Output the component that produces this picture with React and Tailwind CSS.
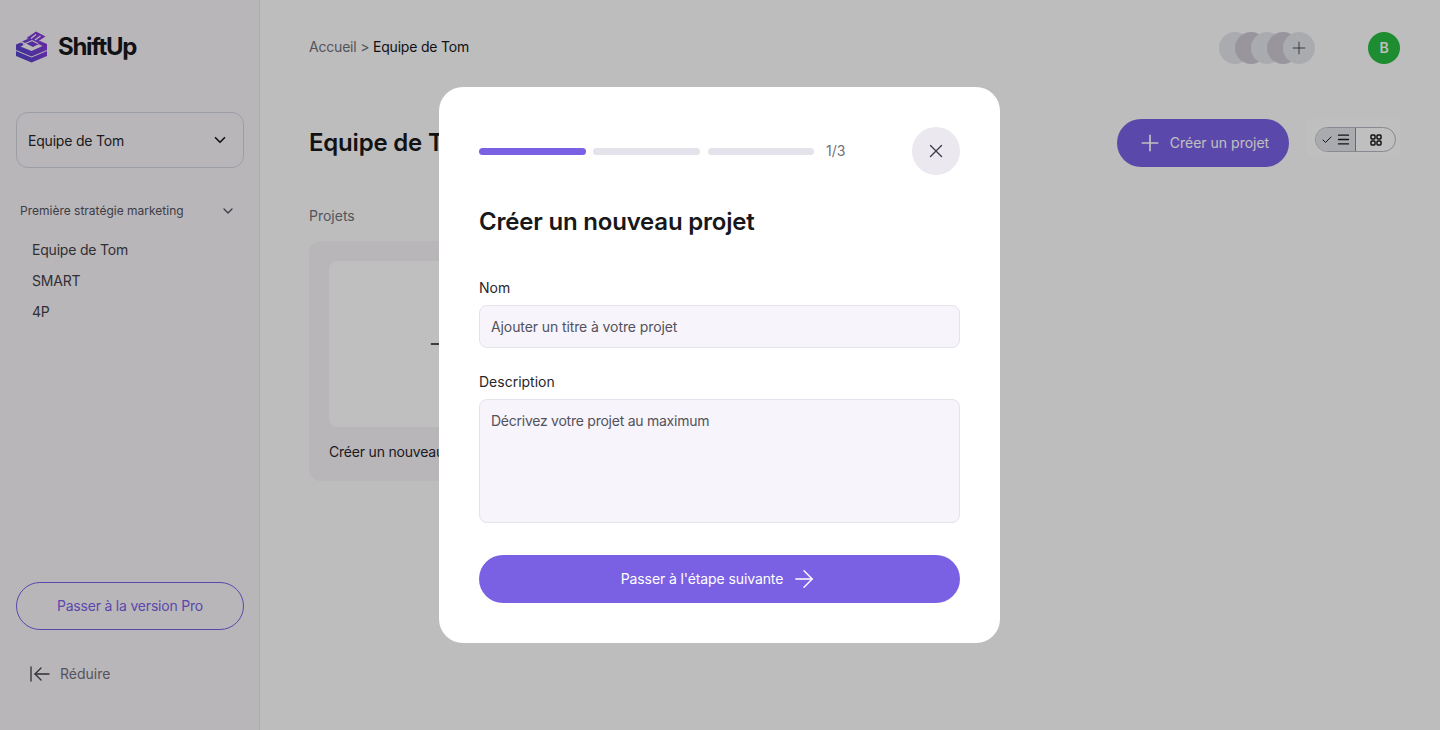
import React from "react";
import { ArrowLeftToLine, ArrowRight, Check, ChevronDown, Menu, Plus, X } from "lucide-react";

const Logo = () => (
  <svg width="32" height="32" viewBox="0 0 32 32" fill="none" className="shrink-0">
    <defs>
      <linearGradient id="stack" x1="0" y1="28" x2="32" y2="6" gradientUnits="userSpaceOnUse">
        <stop offset="0" stopColor="#4f46c8" />
        <stop offset="1" stopColor="#8f38dc" />
      </linearGradient>
    </defs>
    {/* bottom layer */}
    <path d="M0 20L15.5 26.5L31 20V25L15.5 31.5L0 25Z" fill="url(#stack)" />
    {/* middle layer */}
    <path d="M0 13.5V19L15.5 25.5L31 19V13L24 10L20 12L26.5 15L15.5 20L4.5 15.5L9 13.5L5 11.5Z" fill="url(#stack)" />
    <path d="M6 10.5L15 6.5L26 11.5L17 16Z" fill="url(#stack)" />
    {/* top layer */}
    <path d="M10.5 7L20 0.5L29.5 5.5L21 11Z" fill="url(#stack)" />
    <path d="M15 7.5L20 3.5M19 9L24.5 5" stroke="#f7f3f9" strokeWidth="1.3" />
    <path d="M7 13.5L16 9.5L22 12.5" stroke="#f7f3f9" strokeWidth="1.1" />
  </svg>
);

const GridIcon = () => (
  <svg width="12" height="12" viewBox="0 0 12 12" fill="none" stroke="#18181b" strokeWidth="1.5">
    <rect x="1" y="1" width="4" height="4" rx="1" />
    <rect x="7" y="1" width="4" height="4" rx="1" />
    <rect x="1" y="7" width="4" height="4" rx="1" />
    <rect x="7" y="7" width="4" height="4" rx="1" />
  </svg>
);

const Sidebar = () => (
  <aside className="w-[260px] h-full shrink-0 flex flex-col bg-[#f7f3f9] border-r border-[#e6e3ec] pl-4 pr-[15px] pt-[30px] pb-[44px]">
    <div className="flex items-center gap-[10px] h-[33px]">
      <Logo />
      <span className="text-2xl font-bold tracking-[-1.3px] text-[#18181b]">ShiftUp</span>
    </div>

    <div className="mt-[49px] h-[56px] flex items-center justify-between pl-[11px] pr-[14px] rounded-xl border border-[#cfd3dc] text-sm text-[#27272a]">
      <span className="pt-[2px]">Equipe de Tom</span>
      <ChevronDown size={18} strokeWidth={2.2} className="text-[#18181b]" />
    </div>

    <div className="mt-[35px] pl-1 pr-2 flex items-center justify-between text-xs tracking-normal text-[#52525b]">
      Première stratégie marketing
      <ChevronDown size={16} strokeWidth={2} />
    </div>

    <div className="mt-[20px] pl-4 flex flex-col gap-[10px] text-sm leading-[21px] text-[#3f3f46]">
      <span>Equipe de Tom</span>
      <span>SMART</span>
      <span>4P</span>
    </div>

    <button className="mt-auto h-[48px] rounded-full border border-[#7a61e4] text-sm text-[#7a61e4]">
      Passer à la version Pro
    </button>

    <div className="mt-[32px] pl-3 flex items-center gap-2 text-sm tracking-normal text-[#71717a]">
      <ArrowLeftToLine size={24} strokeWidth={1.3} className="text-[#3f3f46]" />
      Réduire
    </div>
  </aside>
);

const Main = () => (
  <main className="flex-1 h-full bg-[#fcfcfc] pl-[49px] pr-10 pt-8">
    <div className="flex items-center justify-between h-8">
      <div className="pb-[2px] text-sm text-[#71717a]">
        Accueil &gt; <span className="text-[#18181b]">Equipe de Tom</span>
      </div>
      <div className="flex items-center gap-[53px]">
        <div className="flex -space-x-4">
          <div className="size-8 rounded-full bg-[#e3e5ea]" />
          <div className="size-8 rounded-full bg-[#cbc9d0]" />
          <div className="size-8 rounded-full bg-[#e3e5ea]" />
          <div className="size-8 rounded-full bg-[#cbc9d0]" />
          <div className="size-8 rounded-full bg-[#e3e5ea] flex items-center justify-center text-[#3f3f46]">
            <Plus size={20} strokeWidth={1.1} />
          </div>
        </div>
        <div className="size-8 rounded-full bg-[#28bb40] flex items-center justify-center text-sm font-semibold text-white">
          B
        </div>
      </div>
    </div>

    <div className="mt-[55px] flex items-center justify-between h-12">
      <h1 className="text-2xl font-semibold text-[#18181b]">Equipe de Tom</h1>
      <div className="flex items-start gap-[18px]">
        <button className="h-12 w-[172px] rounded-full bg-[#7a61e4] flex items-center justify-center gap-[7px] text-sm tracking-normal text-white">
          <Plus size={26} strokeWidth={1.6} />
          Créer un projet
        </button>
        <div className="pl-2 pr-1 pt-2 pb-[3px] bg-white">
          <div className="flex h-[25px] w-[81px] rounded-full border border-[#b8b6c0] overflow-hidden">
            <div className="w-10 bg-[#e3e5ea] border-r border-[#8e8b96] flex items-center justify-center gap-[3px] text-[#18181b]">
              <Check size={12} strokeWidth={2} />
              <Menu size={15} strokeWidth={2.2} />
            </div>
            <div className="flex-1 flex items-center justify-center">
              <GridIcon />
            </div>
          </div>
        </div>
      </div>
    </div>

    <p className="mt-[39px] text-sm leading-5 tracking-normal text-[#71717a]">Projets</p>

    <div className="mt-[15px] w-[268px] h-[240px] p-5 rounded-xl bg-[#f7f3f9]">
      <div className="h-[166px] rounded-lg bg-white flex items-center justify-center text-[#18181b]">
        <Plus size={40} strokeWidth={0.8} />
      </div>
      <p className="mt-[15px] text-sm text-[#27272a]">Créer un nouveau projet</p>
    </div>
  </main>
);

const Field = ({ label, children }) => (
  <div className="flex flex-col gap-[7px]">
    <label className="text-sm leading-[21px] tracking-normal text-[#27272a]">{label}</label>
    {children}
  </div>
);

const Modal = () => (
  <div className="fixed inset-0 pr-px bg-black/25 flex items-center justify-center">
    <div className="w-[561px] h-[556px] rounded-3xl bg-white p-10 flex flex-col">
      <div className="flex items-center justify-between h-12">
        <div className="flex items-center gap-[7px]">
          <div className="w-[107px] h-[7px] rounded-full bg-[#7a61e4]" />
          <div className="w-[107px] h-[7px] rounded-full bg-[#e4e2ea]" />
          <div className="ml-px w-[106px] h-[7px] rounded-full bg-[#e4e2ea]" />
          <span className="ml-[5px] text-sm tracking-normal text-[#71717a]">1/3</span>
        </div>
        <button className="size-12 rounded-full bg-[#ebe8f0] flex items-center justify-center text-[#3f3f46]">
          <X size={22} strokeWidth={1.5} />
        </button>
      </div>

      <h2 className="mt-[31px] text-2xl leading-8 font-semibold text-[#18181b]">Créer un nouveau projet</h2>

      <div className="mt-[39px] flex flex-col gap-[23px]">
        <Field label="Nom">
          <input
            placeholder="Ajouter un titre à votre projet"
            className="w-full h-[43px] px-[11px] rounded-lg border border-[#e4e2ea] bg-[#f7f4fb] text-sm tracking-[-0.1px] text-[#52525b] placeholder:text-[#52525b] outline-none"
          />
        </Field>
        <Field label="Description">
          <textarea
            placeholder="Décrivez votre projet au maximum"
            className="block w-full h-[124px] px-[11px] py-[11px] rounded-lg border border-[#e4e2ea] bg-[#f7f4fb] text-sm tracking-[-0.25px] text-[#52525b] placeholder:text-[#52525b] outline-none resize-none"
          />
        </Field>
      </div>

      <button className="mt-8 h-12 rounded-full bg-[#7a61e4] flex items-center justify-center gap-[7px] text-sm tracking-[-0.1px] text-white">
        Passer à l'étape suivante
        <ArrowRight size={28} strokeWidth={1.2} />
      </button>
    </div>
  </div>
);

export default function App() {
  return (
    <div className="flex w-full h-[730px] overflow-hidden tracking-[-0.2px] font-['Inter','Noto_Sans',sans-serif]">
      <Sidebar />
      <Main />
      <Modal />
    </div>
  );
}
